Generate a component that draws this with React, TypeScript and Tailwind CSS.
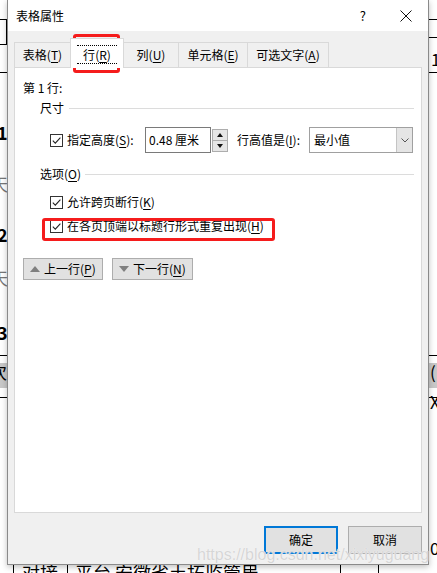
import React from "react";

const Key = ({ k }: { k: string }) => (
  <span className="underline decoration-1 underline-offset-[2px]">{k}</span>
);

const Check = () => (
  <span className="flex h-[13px] w-[13px] shrink-0 items-center justify-center border border-[#333] bg-white">
    <svg width="11" height="11" viewBox="0 0 11 11">
      <path d="M1.8 5.6 L4.3 8.1 L9.4 2.6" fill="none" stroke="#222" strokeWidth="1.1" />
    </svg>
  </span>
);

const Tri = ({ up }: { up?: boolean }) => (
  <svg width="10" height="6" viewBox="0 0 10 6">
    <path d={up ? "M0 6 L5 0 L10 6 Z" : "M0 0 L10 0 L5 6 Z"} fill="#7f7f7f" />
  </svg>
);

const tabs = [
  { label: "表格", k: "T", w: "w-[57px]" },
  { label: "行", k: "R", w: "w-[54px]", active: true },
  { label: "列", k: "U", w: "w-[56px]" },
  { label: "单元格", k: "E", w: "w-[70px]" },
  { label: "可选文字", k: "A", w: "w-[82px]" },
];

const Backdrop = () => (
  <>
    {/* left strip of the document behind the dialog */}
    <div className="absolute left-0 top-[19px] h-px w-[7px] bg-black" />
    <div className="absolute left-[6px] top-[19px] h-[26px] w-px bg-black" />
    <div className="absolute left-0 top-[44px] h-px w-[7px] bg-black" />
    <div className="absolute left-0 top-[72px] h-px w-[7px] bg-black" />
    <span className="absolute left-[-3px] top-[124px] text-[18px] font-bold">1</span>
    <span className="absolute left-[-9px] top-[176px] text-[17px] text-[#777]">天</span>
    <span className="absolute left-[-3px] top-[226px] text-[18px] font-bold">2</span>
    <span className="absolute left-[-9px] top-[270px] text-[17px] text-[#777]">天</span>
    <span className="absolute left-[-3px] top-[324px] text-[18px] font-bold">3</span>
    <div className="absolute left-0 top-[355px] h-px w-[7px] bg-black" />
    <div className="absolute left-0 top-[363px] h-[25px] w-[7px] overflow-hidden bg-[#c8c8c8]">
      <span className="absolute left-[-10px] top-[1px] text-[17px]">次</span>
    </div>
    <div className="absolute left-0 top-[397px] h-px w-[7px] bg-black" />

    {/* right strip */}
    <div className="absolute right-0 top-[19px] h-px w-[8px] bg-black" />
    <div className="absolute right-0 top-[37px] h-px w-[8px] bg-black" />
    <span className="absolute left-[431px] top-[51px] text-[17px]">1</span>
    <div className="absolute right-0 top-[72px] h-px w-[8px] bg-black" />
    <div className="absolute right-0 top-[355px] h-px w-[8px] bg-black" />
    <div className="absolute right-0 top-[363px] h-[25px] w-[8px] overflow-hidden bg-[#c8c8c8]">
      <span className="absolute left-[1px] top-[1px] text-[17px]">(</span>
    </div>
    <div className="absolute right-0 top-[397px] h-px w-[8px] bg-black" />
    <span className="absolute left-[430px] top-[394px] text-[17px]">X</span>
    <span className="absolute left-[430px] top-[540px] text-[17px]">0</span>

    {/* bottom strip */}
    <div className="absolute left-[13px] top-[560px] h-[13px] w-px bg-black" />
    <div className="absolute left-[67px] top-[560px] h-[13px] w-px bg-black" />
    <div className="absolute left-[250px] top-[560px] h-[13px] w-px bg-black" />
    <div className="absolute left-[340px] top-[560px] h-[13px] w-px bg-black" />
    <div className="absolute left-[378px] top-[560px] h-[13px] w-px bg-black" />
    <span className="absolute left-[22px] top-[562px] text-[18px] leading-[20px]">对接</span>
    <span className="absolute left-[75px] top-[562px] text-[18px] leading-[20px]">平台 安徽省土拓监管局</span>
  </>
);

export default function App() {
  return (
    <div className="relative h-[573px] w-[437px] overflow-hidden bg-white font-['Noto_Sans_CJK_SC',sans-serif] text-[12px] leading-[16px] text-black">
      <Backdrop />

      <div className="absolute left-[7px] top-0 flex h-[565px] w-[422px] flex-col border-x border-b border-[#8a8a8a] bg-[#f0f0f0] shadow-[0_2px_6px_rgba(0,0,0,0.25)]">
        {/* title bar */}
        <div className="flex h-[31px] items-center justify-between bg-white pl-[8px]">
          <span className="text-[12px]">表格属性</span>
          <div className="mr-[16px] flex items-center gap-[34px]">
            <span className="text-[13px]">?</span>
            <svg width="12" height="12" viewBox="0 0 12 12">
              <path d="M0.5 0.5 L11.5 11.5 M11.5 0.5 L0.5 11.5" stroke="#111" strokeWidth="1" />
            </svg>
          </div>
        </div>

        <div className="flex flex-1 flex-col px-[6px]">
          {/* tabs */}
          <div className="flex h-[36px] items-end">
            {tabs.map((t) =>
              t.active ? (
                <div
                  key={t.k}
                  className={`relative z-10 -mb-px -ml-px flex h-[30px] items-center justify-center border-x border-t border-[#d9d9d9] bg-white pt-[2px] ${t.w}`}
                >
                  <span className="flex h-[19px] items-center border-y border-dotted border-black px-[6px]">
                    <span>
                      {t.label}(<Key k={t.k} />)
                    </span>
                  </span>
                </div>
              ) : (
                <div
                  key={t.k}
                  className={`-ml-px flex h-[25px] items-center justify-center border-x border-t border-[#d9d9d9] bg-[#f0f0f0] first:ml-0 ${t.w}`}
                >
                  {t.label}(<Key k={t.k} />)
                </div>
              )
            )}
          </div>

          {/* pane */}
          <div className="flex h-[446px] flex-col border border-[#d9d9d9] bg-white pl-[8px] pr-[7px] pt-[12px]">
            <div className="h-[16px]">第 1 行:</div>

            <div className="ml-[17px] mt-[4px] flex h-[16px] items-center">
              <span>尺寸</span>
              <div className="ml-[5px] h-px flex-1 bg-[#dcdcdc]" />
            </div>

            <div className="ml-[27px] mt-[11px] flex h-[26px] items-center">
              <Check />
              <span className="ml-[4px] w-[78px]">
                指定高度(<Key k="S" />):
              </span>
              <div className="flex h-[26px] w-[66px] items-center border border-[#7a7a7a] pl-[3px]">
                0.48 厘米
              </div>
              <div className="ml-[1px] flex h-[23px] w-[16px] flex-col border border-[#adadad] bg-[#e6e6e6]">
                <div className="flex flex-1 items-center justify-center border-b border-[#adadad]">
                  <svg width="6" height="4" viewBox="0 0 6 4">
                    <path d="M0 4 L3 0 L6 4 Z" fill="#111" />
                  </svg>
                </div>
                <div className="flex flex-1 items-center justify-center">
                  <svg width="6" height="4" viewBox="0 0 6 4">
                    <path d="M0 0 L6 0 L3 4 Z" fill="#111" />
                  </svg>
                </div>
              </div>
              <span className="ml-[9px] w-[72px]">
                行高值是(<Key k="I" />):
              </span>
              <div className="flex h-[26px] w-[104px] items-stretch border border-[#a0a0a0]">
                <span className="flex flex-1 items-center pl-[4px]">最小值</span>
                <span className="flex w-[16px] items-center justify-center border-l border-[#c4c4c4] bg-[#e5e5e5]">
                  <svg width="8" height="5" viewBox="0 0 8 5">
                    <path d="M0.5 0.5 L4 4 L7.5 0.5" fill="none" stroke="#555" strokeWidth="1" />
                  </svg>
                </span>
              </div>
            </div>

            <div className="ml-[17px] mt-[13px] flex h-[16px] items-center">
              <span>
                选项(<Key k="O" />)
              </span>
              <div className="ml-[4px] h-px flex-1 bg-[#dcdcdc]" />
            </div>

            <div className="ml-[27px] mt-[12px] flex h-[16px] items-center gap-[4px]">
              <Check />
              <span>
                允许跨页断行(<Key k="K" />)
              </span>
            </div>

            <div className="ml-[27px] mt-[8px] flex h-[16px] items-center gap-[4px]">
              <Check />
              <span>
                在各页顶端以标题行形式重复出现(<Key k="H" />)
              </span>
            </div>

            <div className="mt-[24px] flex gap-[9px]">
              <button className="flex h-[22px] w-[80px] items-center gap-[4px] border border-[#adadad] bg-[#e1e1e1] pl-[6px]">
                <Tri up />
                <span>
                  上一行(<Key k="P" />)
                </span>
              </button>
              <button className="flex h-[22px] w-[81px] items-center gap-[4px] border border-[#adadad] bg-[#e1e1e1] pl-[6px]">
                <Tri />
                <span>
                  下一行(<Key k="N" />)
                </span>
              </button>
            </div>
          </div>

          {/* footer */}
          <div className="mt-[13px] flex justify-end gap-[10px]">
            <button className="h-[28px] w-[74px] border-2 border-[#0078d7] bg-[#e1e1e1]">确定</button>
            <button className="h-[28px] w-[74px] border border-[#adadad] bg-[#e1e1e1]">取消</button>
          </div>
        </div>
      </div>

      {/* annotation boxes */}
      <div className="absolute left-[73px] top-[34px] h-[39px] w-[47px] rounded-[3px] border-[3px] border-[#f51c1c]" />
      <div className="absolute left-[42px] top-[218px] h-[23px] w-[233px] rounded-[3px] border-[3px] border-[#f51c1c]" />

      {/* watermark */}
      <span className="absolute left-[197px] top-[546px] font-['Liberation_Sans',sans-serif] text-[16px] leading-[18px] text-[#d6d6d6] [text-shadow:0_0_1px_#ffffff]">
        https://blog.csdn.net/xixiyuguang
      </span>
    </div>
  );
}
